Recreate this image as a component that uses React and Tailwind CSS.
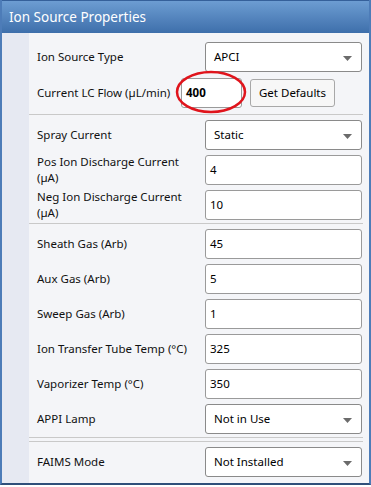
import React from "react";

const font = { fontFamily: '"Noto Sans", "Open Sans", sans-serif' };

const Arrow = () => (
  <svg width="9" height="5" viewBox="0 0 9 5" className="absolute right-[9px] top-[13px]">
    <path d="M0 0 H9 L4.5 5 Z" fill="#6b6b6b" />
  </svg>
);

const Select = ({ value }) => (
  <div className="relative w-[157px] h-[30px] bg-white border border-[#8a8a8a] rounded-[3px] flex items-center pl-[8px] text-[11.5px] text-black">
    {value}
    <Arrow />
  </div>
);

const Input = ({ value, bold, className = "w-[157px]" }) => (
  <div
    className={`${className} h-[30px] bg-white border border-[#9a9a9a] rounded-[3px] flex items-center pl-[4px] text-[11.5px] text-black ${
      bold ? "font-bold" : ""
    }`}
  >
    {value}
  </div>
);

const Row = ({ label, children }) => (
  <div className="flex items-center h-[30px]">
    <div className="w-[176px] pl-[8px] pr-[14px] text-[11.5px] leading-[16px] text-[#111]">{label}</div>
    {children}
  </div>
);

const Separator = () => <div className="h-px bg-[#c9c9c9]" />;

export default function App() {
  return (
    <div className="w-[371px] h-[487px] bg-white" style={font}>
      <div className="h-[485px] flex flex-col border-x-2 border-b-2 border-[#4d7cb8] border-b-[#2f4f7a]">
        {/* header */}
        <div className="h-[33px] shrink-0 bg-gradient-to-b from-[#6d9dd2] to-[#3e6fab] border-t border-[#35609a] flex items-center pl-[7px]">
          <span className="text-white text-[13.5px]">Ion Source Properties</span>
        </div>

        <div className="flex flex-1">
          <div className="w-[27px] bg-[#e6e9f2]" />
          <div className="flex-1 bg-[#f4f5f8] pr-[6px] flex flex-col">
            {/* source type */}
            <div className="flex flex-col gap-[6px] pt-[9px] pb-[6px]">
              <Row label="Ion Source Type">
                <Select value="APCI" />
              </Row>
              <div className="flex items-center h-[30px]">
                <div className="w-[152px] pl-[8px] text-[11.5px] whitespace-nowrap text-[#111]">
                  Current LC Flow (µL/min)
                </div>
                <div className="relative">
                  <Input value="400" bold className="w-[61px]" />
                  <svg
                    width="72"
                    height="44"
                    viewBox="0 0 72 44"
                    className="absolute left-[-6px] top-[-8px] pointer-events-none"
                  >
                    <ellipse cx="36" cy="22" rx="34" ry="20" fill="none" stroke="#e0141c" strokeWidth="2.5" />
                  </svg>
                </div>
                <button className="ml-[8px] w-[85px] h-[28px] bg-[#f7f7f7] border border-[#a8a8a8] rounded-[3px] text-[11.5px] text-black">
                  Get Defaults
                </button>
              </div>
            </div>
            <Separator />

            {/* spray */}
            <div className="flex flex-col gap-[5px] pt-[5px] pb-[3px]">
              <Row label="Spray Current">
                <Select value="Static" />
              </Row>
              <Row label="Pos Ion Discharge Current (µA)">
                <Input value="4" />
              </Row>
              <Row label="Neg Ion Discharge Current (µA)">
                <Input value="10" />
              </Row>
            </div>
            <Separator />

            {/* gases and temps */}
            <div className="flex flex-col gap-[5px] pt-[5px] pb-[3px]">
              <Row label="Sheath Gas (Arb)">
                <Input value="45" />
              </Row>
              <Row label="Aux Gas (Arb)">
                <Input value="5" />
              </Row>
              <Row label="Sweep Gas (Arb)">
                <Input value="1" />
              </Row>
              <Row label="Ion Transfer Tube Temp (°C)">
                <Input value="325" />
              </Row>
              <Row label="Vaporizer Temp (°C)">
                <Input value="350" />
              </Row>
              <Row label="APPI Lamp">
                <Select value="Not in Use" />
              </Row>
            </div>
            <Separator />
            <div className="h-[3px]" />
            <Separator />

            {/* faims */}
            <div className="pt-[5px]">
              <Row label="FAIMS Mode">
                <Select value="Not Installed" />
              </Row>
            </div>
          </div>
        </div>
      </div>
    </div>
  );
}
